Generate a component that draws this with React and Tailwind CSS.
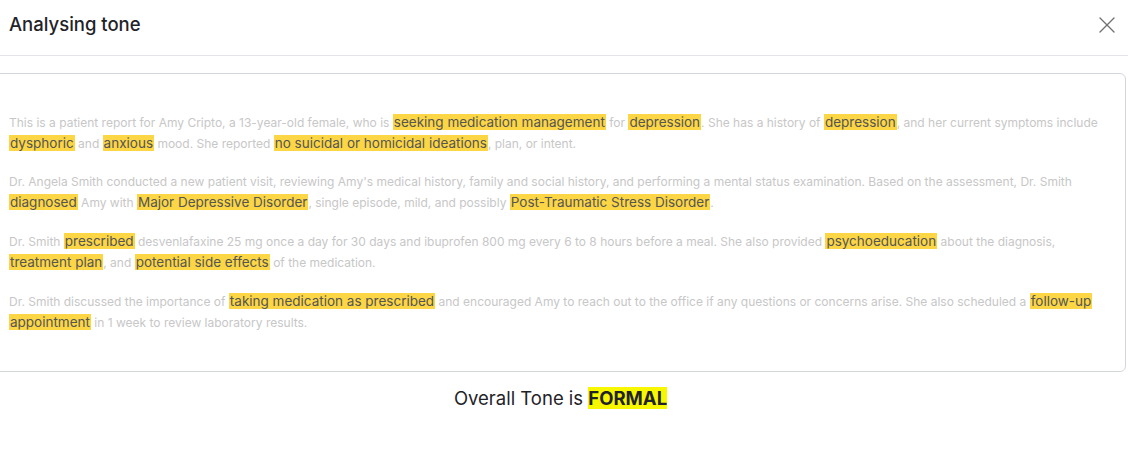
import { X } from 'lucide-react';

const paragraphs = [
  [
    'This is a patient report for Amy Cripto, a 13-year-old female, who is ',
    { hl: 'seeking medication management' },
    ' for ',
    { hl: 'depression' },
    '. She has a history of ',
    { hl: 'depression' },
    ', and her current symptoms include ',
    { hl: 'dysphoric' },
    ' and ',
    { hl: 'anxious' },
    ' mood. She reported ',
    { hl: 'no suicidal or homicidal ideations' },
    ', plan, or intent.',
  ],
  [
    "Dr. Angela Smith conducted a new patient visit, reviewing Amy's medical history, family and social history, and performing a mental status examination. Based on the assessment, Dr. Smith ",
    { hl: 'diagnosed' },
    ' Amy with ',
    { hl: 'Major Depressive Disorder' },
    ', single episode, mild, and possibly ',
    { hl: 'Post-Traumatic Stress Disorder' },
    '.',
  ],
  [
    'Dr. Smith ',
    { hl: 'prescribed' },
    ' desvenlafaxine 25 mg once a day for 30 days and ibuprofen 800 mg every 6 to 8 hours before a meal. She also provided ',
    { hl: 'psychoeducation' },
    ' about the diagnosis, ',
    { hl: 'treatment plan' },
    ', and ',
    { hl: 'potential side effects' },
    ' of the medication.',
  ],
  [
    'Dr. Smith discussed the importance of ',
    { hl: 'taking medication as prescribed' },
    ' and encouraged Amy to reach out to the office if any questions or concerns arise. She also scheduled a ',
    { hl: 'follow-up' },
    ' ',
    { hl: 'appointment' },
    ' in 1 week to review laboratory results.',
  ],
];

const Highlight = ({ children }) => (
  <span className="bg-[#fcd644] px-px text-[13.5px] text-[#555555]">{children}</span>
);

export default function App() {
  return (
    <div className="h-[462px] w-[1128px] overflow-hidden bg-white font-['Inter',sans-serif]">
      <header className="flex h-[56px] items-center justify-between border-b border-[#e3e4e8] pb-[5px] pl-[9px] pr-[7px]">
        <h1 className="text-[18.5px] font-medium text-[#1f2328]">Analysing tone</h1>
        <button type="button" className="text-[#727272]" aria-label="Close">
          <X className="h-[28px] w-[28px]" strokeWidth={1.2} aria-hidden="true" />
        </button>
      </header>

      <div className="mt-[17px] ml-[-10px] w-[1136px] rounded-md border border-[#d3d6dd] pt-[38px] pb-[20px] pl-[18px] pr-[20px]">
        {paragraphs.map((parts, index) => (
          <p key={index} className="mb-[18px] text-[12px] leading-[20px] text-[#c7c7c7]">
            {parts.map((part, i) =>
              typeof part === 'string' ? <span key={i}>{part}</span> : <Highlight key={i}>{part.hl}</Highlight>
            )}
          </p>
        ))}
      </div>

      <p className="mt-[13px] pr-[7px] text-center text-[18.5px] text-[#1f2328]">
        Overall Tone is <span className="bg-[#f7f700] font-bold">FORMAL</span>
      </p>
    </div>
  );
}
